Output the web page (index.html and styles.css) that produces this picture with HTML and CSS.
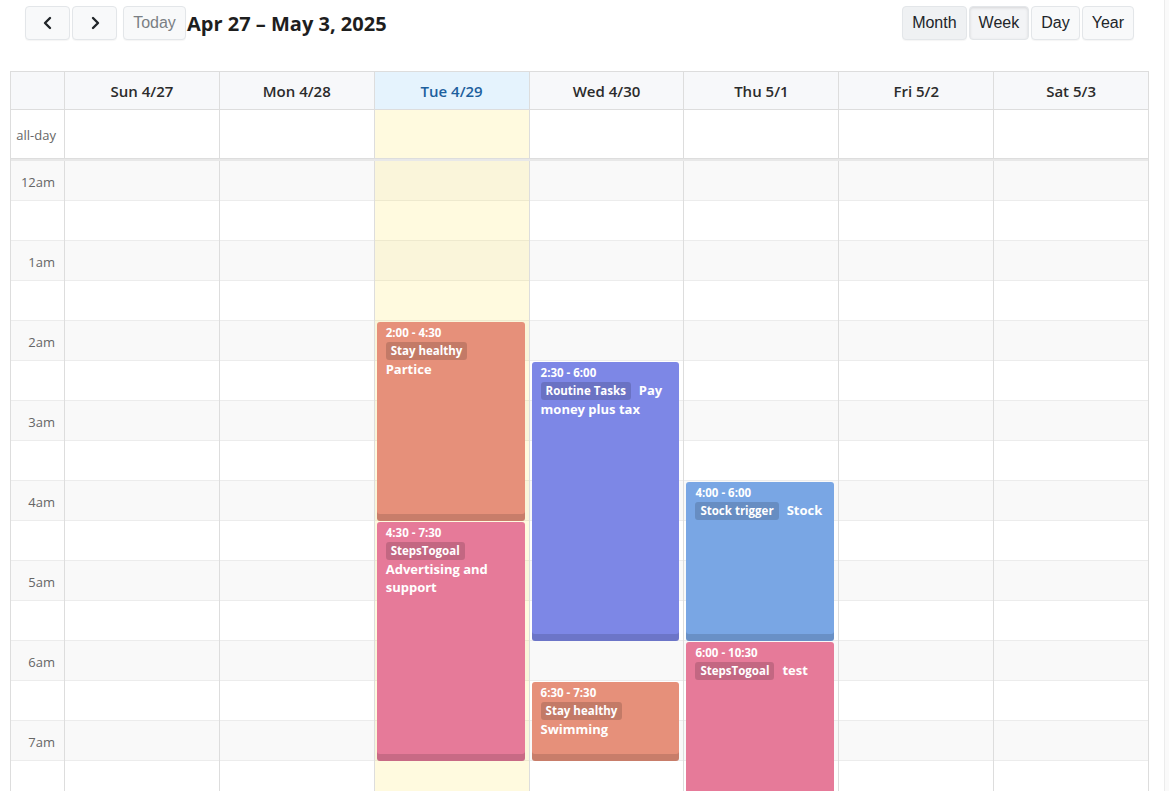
FILE: index.html
```html
<!DOCTYPE html>
<html lang="en">
<head>
    <meta charset="UTF-8">
    <title>Week</title>
    <link rel="stylesheet" href="styles.css">
</head>
<body>
<div class="page">

    <!-- Toolbar -->
    <div class="toolbar">
        <div class="toolbar-left">
            <div class="btn-group">
                <button class="btn btn-icon" aria-label="prev">
                    <svg width="12" height="14" viewBox="0 0 12 14"><polyline points="8,2 3,7 8,12" fill="none" stroke="#212529" stroke-width="2.4" stroke-linecap="round" stroke-linejoin="round"/></svg>
                </button>
                <button class="btn btn-icon" aria-label="next">
                    <svg width="12" height="14" viewBox="0 0 12 14"><polyline points="4,2 9,7 4,12" fill="none" stroke="#212529" stroke-width="2.4" stroke-linecap="round" stroke-linejoin="round"/></svg>
                </button>
            </div>
            <button class="btn btn-today" disabled>Today</button>
            <h2 class="title">Apr 27 – May 3, 2025</h2>
        </div>
        <div class="btn-group">
            <button class="btn btn-month">Month</button>
            <button class="btn btn-active">Week</button>
            <button class="btn">Day</button>
            <button class="btn">Year</button>
        </div>
    </div>

    <!-- Calendar -->
    <div class="cal">
        <div class="head-row">
            <div class="axis"></div>
            <div class="day-head">Sun 4/27</div>
            <div class="day-head">Mon 4/28</div>
            <div class="day-head today-head">Tue 4/29</div>
            <div class="day-head">Wed 4/30</div>
            <div class="day-head">Thu 5/1</div>
            <div class="day-head">Fri 5/2</div>
            <div class="day-head">Sat 5/3</div>
        </div>
        <div class="allday-row">
            <div class="axis axis-label">all-day</div>
            <div class="allday"></div>
            <div class="allday"></div>
            <div class="allday today"></div>
            <div class="allday"></div>
            <div class="allday"></div>
            <div class="allday"></div>
            <div class="allday"></div>
        </div>
        <div class="divider"></div>

        <div class="timegrid">
            <div class="slot hour"><div class="axis axis-label">12am</div></div>
            <div class="slot"><div class="axis"></div></div>
            <div class="slot hour"><div class="axis axis-label">1am</div></div>
            <div class="slot"><div class="axis"></div></div>
            <div class="slot hour"><div class="axis axis-label">2am</div></div>
            <div class="slot"><div class="axis"></div></div>
            <div class="slot hour"><div class="axis axis-label">3am</div></div>
            <div class="slot"><div class="axis"></div></div>
            <div class="slot hour"><div class="axis axis-label">4am</div></div>
            <div class="slot"><div class="axis"></div></div>
            <div class="slot hour"><div class="axis axis-label">5am</div></div>
            <div class="slot"><div class="axis"></div></div>
            <div class="slot hour"><div class="axis axis-label">6am</div></div>
            <div class="slot"><div class="axis"></div></div>
            <div class="slot hour"><div class="axis axis-label">7am</div></div>
            <div class="slot"><div class="axis"></div></div>
            <div class="slot hour"><div class="axis axis-label">8am</div></div>
            <div class="slot"><div class="axis"></div></div>

            <!-- day columns with events, laid over the slots -->
            <div class="cols">
                <div class="col"></div>
                <div class="col"></div>
                <div class="col today">
                    <div class="event salmon" style="top: 161px; height: 199px;">
                        <div class="ev-time">2:00 - 4:30</div>
                        <div class="ev-body"><span class="tag">Stay healthy</span><span class="ev-title">Partice</span></div>
                    </div>
                    <div class="event pink" style="top: 361px; height: 239px;">
                        <div class="ev-time">4:30 - 7:30</div>
                        <div class="ev-body"><span class="tag">StepsTogoal</span><span class="ev-title">Advertising and support</span></div>
                    </div>
                </div>
                <div class="col">
                    <div class="event purple" style="top: 201px; height: 279px;">
                        <div class="ev-time">2:30 - 6:00</div>
                        <div class="ev-body"><span class="tag">Routine Tasks</span><span class="ev-title">Pay money plus tax</span></div>
                    </div>
                    <div class="event salmon" style="top: 521px; height: 79px;">
                        <div class="ev-time">6:30 - 7:30</div>
                        <div class="ev-body"><span class="tag">Stay healthy</span><span class="ev-title">Swimming</span></div>
                    </div>
                </div>
                <div class="col">
                    <div class="event blue" style="top: 321px; height: 159px;">
                        <div class="ev-time">4:00 - 6:00</div>
                        <div class="ev-body"><span class="tag">Stock trigger</span><span class="ev-title">Stock</span></div>
                    </div>
                    <div class="event pink" style="top: 481px; height: 359px;">
                        <div class="ev-time">6:00 - 10:30</div>
                        <div class="ev-body"><span class="tag">StepsTogoal</span><span class="ev-title">test</span></div>
                    </div>
                </div>
                <div class="col"></div>
                <div class="col"></div>
            </div>
        </div>
    </div>

</div>
</body>
</html>
```

FILE: styles.css
```css
html, body {
    margin: 0;
    padding: 0;
    height: 100%;
    overflow: hidden;
}
body {
    font-family: "Open Sans", "Noto Sans", sans-serif;
    color: #212529;
    background-color: #fafafa;
}
.page {
    width: 1164px;
    min-height: 100%;
    background-color: #fff;
    border-right: 1px solid #ececec;
}

/* Toolbar */
.toolbar {
    display: flex;
    justify-content: space-between;
    align-items: center;
    padding: 6px 30px 0 25px;
}
.toolbar-left {
    display: flex;
    align-items: center;
}
.btn-group {
    display: flex;
    gap: 2px;
}
.btn {
    font-family: "Liberation Sans", Arial, sans-serif;
    font-size: 16px;
    height: 34px;
    padding: 0 9px;
    color: #212529;
    background-color: #f8f9fa;
    border: 1px solid #e3e6e9;
    border-radius: 4px;
    box-shadow: 0 1px 1px rgba(0, 0, 0, 0.04);
}
.btn-icon {
    width: 45px;
    display: flex;
    align-items: center;
    justify-content: center;
}
.btn-today {
    margin-left: 6px;
    color: #7a7f84;
    width: 63px;
    padding: 0;
}
.btn-month {
    background-color: #eff1f3;
}
.btn-active {
    background-color: #f3f4f6;
    box-shadow: inset 0 1px 3px rgba(0, 0, 0, 0.12);
}
.title {
    margin: 0 0 0 1px;
    font-size: 20px;
    font-weight: 700;
    color: #1e1e1e;
}

/* Calendar */
.cal {
    margin: 31px 15px 0 10px;
    border: 1px solid #dddddd;
    border-bottom: none;
    font-size: 13px;
}
.head-row,
.allday-row,
.slot {
    display: grid;
    grid-template-columns: 53px repeat(7, 1fr);
}
.head-row {
    height: 37px;
    border-bottom: 1px solid #dddddd;
    background-color: #f7f8fa;
}
.day-head {
    border-left: 1px solid #dddddd;
    display: flex;
    align-items: center;
    justify-content: center;
    font-size: 15px;
    font-weight: 600;
    color: #2b2b2b;
}
.today-head {
    background-color: #e5f3fd;
    color: #1d5f9d;
}
.allday-row {
    height: 48px;
    border-bottom: 1px solid #dddddd;
}
.allday {
    border-left: 1px solid #dddddd;
}
.today {
    background-color: rgba(255, 220, 40, 0.15);
}
.axis-label {
    display: flex;
    align-items: center;
    justify-content: flex-end;
    padding-right: 8px;
    color: #666;
    font-size: 13px;
}
.allday-row .axis-label {
    padding-right: 8px;
    padding-top: 2px;
}
.divider {
    height: 2px;
    background-color: #e8e8e8;
}

/* Time grid */
.timegrid {
    position: relative;
}
.slot {
    height: 39px;
    border-bottom: 1px solid #ececec;
}
.slot .axis-label {
    padding-top: 3px;
    padding-right: 9px;
}
.hour {
    background-color: #f9f9f9;
}
.cols {
    position: absolute;
    top: 0;
    left: 53px;
    right: 0;
    bottom: 0;
    display: grid;
    grid-template-columns: repeat(7, 1fr);
}
.col {
    position: relative;
    border-left: 1px solid #dddddd;
}

/* Events */
.event {
    position: absolute;
    left: 2px;
    right: 4px;
    box-sizing: border-box;
    padding: 4px 8px 4px 9px;
    border-radius: 3px;
    color: #fff;
    box-shadow: inset 0 -7px 0 rgba(0, 0, 0, 0.13);
    overflow: hidden;
}
.salmon { background-color: #e6907a; }
.pink { background-color: #e67a99; }
.purple { background-color: #7d87e6; }
.blue { background-color: #79a6e4; }
.ev-time {
    font-size: 11.5px;
    font-weight: 700;
    line-height: 14px;
}
.ev-body {
    margin-top: 1px;
    font-size: 13px;
    font-weight: 700;
    line-height: 18px;
}
.tag {
    display: inline-block;
    padding: 0 5px;
    margin-right: 8px;
    font-size: 11.5px;
    font-weight: 700;
    line-height: 18px;
    border-radius: 3px;
    background-color: rgba(0, 0, 0, 0.15);
}
```
